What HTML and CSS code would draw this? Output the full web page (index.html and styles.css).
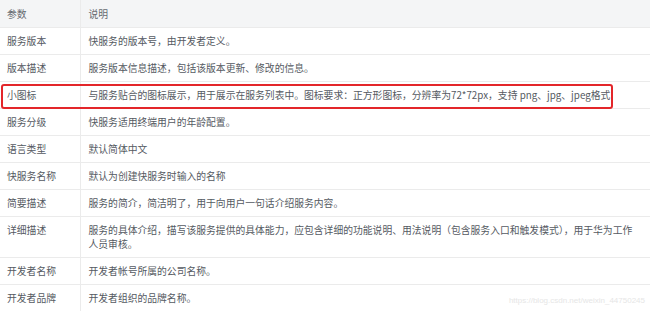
FILE: index.html
```html
<!DOCTYPE html>
<html lang="zh-CN">
<head>
<meta charset="utf-8">
<title>参数说明</title>
<link rel="stylesheet" href="styles.css">
</head>
<body>
<div class="wrap">
  <table class="params">
    <colgroup><col class="c1"><col class="c2"></colgroup>
    <thead>
      <tr><th>参数</th><th>说明</th></tr>
    </thead>
    <tbody>
      <tr><td>服务版本</td><td>快服务的版本号，由开发者定义。</td></tr>
      <tr><td>版本描述</td><td>服务版本信息描述，包括该版本更新、修改的信息。</td></tr>
      <tr><td>小图标</td><td>与服务贴合的图标展示，用于展示在服务列表中。图标要求：正方形图标，分辨率为72*72px，支持 png、jpg、jpeg格式</td></tr>
      <tr><td>服务分级</td><td>快服务适用终端用户的年龄配置。</td></tr>
      <tr><td>语言类型</td><td>默认简体中文</td></tr>
      <tr><td>快服务名称</td><td>默认为创建快服务时输入的名称</td></tr>
      <tr><td>简要描述</td><td>服务的简介，简洁明了，用于向用户一句话介绍服务内容。</td></tr>
      <tr><td>详细描述</td><td>服务的具体介绍，描写该服务提供的具体能力，应包含详细的功能说明、用法说明（包含服务入口和触发模式），用于华为工作人员审核。</td></tr>
      <tr><td>开发者名称</td><td>开发者帐号所属的公司名称。</td></tr>
      <tr><td>开发者品牌</td><td>开发者组织的品牌名称。</td></tr>
    </tbody>
  </table>
  <div class="mark"></div>
  <div class="watermark">https://blog.csdn.net/weixin_44750245</div>
</div>
</body>
</html>
```
FILE: styles.css
```css
html, body {
  margin: 0;
  padding: 0;
  background: #ffffff;
}
body {
  font-family: "Noto Sans CJK SC", "Noto Sans", sans-serif;
  font-size: 9.8px;
  color: #555a62;
  overflow: hidden;
}
.wrap {
  position: relative;
  width: 650px;
  height: 311px;
  overflow: hidden;
}
.params {
  width: 650px;
  border-collapse: collapse;
  table-layout: fixed;
}
.c1 { width: 80px; }
.params th,
.params td {
  text-align: left;
  vertical-align: top;
  line-height: 14px;
  padding: 6px 8px 6px 8px;
  border-bottom: 1px solid #ebebeb;
  font-weight: normal;
}
.params th:first-child,
.params td:first-child {
  border-right: 1px solid #ebebeb;
  padding-left: 7px;
}
.params th {
  background: #f4f5f6;
  color: #666a70;
  padding-top: 7px;
  padding-bottom: 6px;
}
.mark {
  position: absolute;
  left: 1px;
  top: 84px;
  width: 608px;
  height: 21px;
  border: 2px solid #e3262a;
  border-radius: 3px;
}
.watermark {
  position: absolute;
  right: 5px;
  bottom: 6px;
  font-family: "Liberation Sans", Arial, sans-serif;
  font-size: 8px;
  color: #e6e6e6;
}
```
